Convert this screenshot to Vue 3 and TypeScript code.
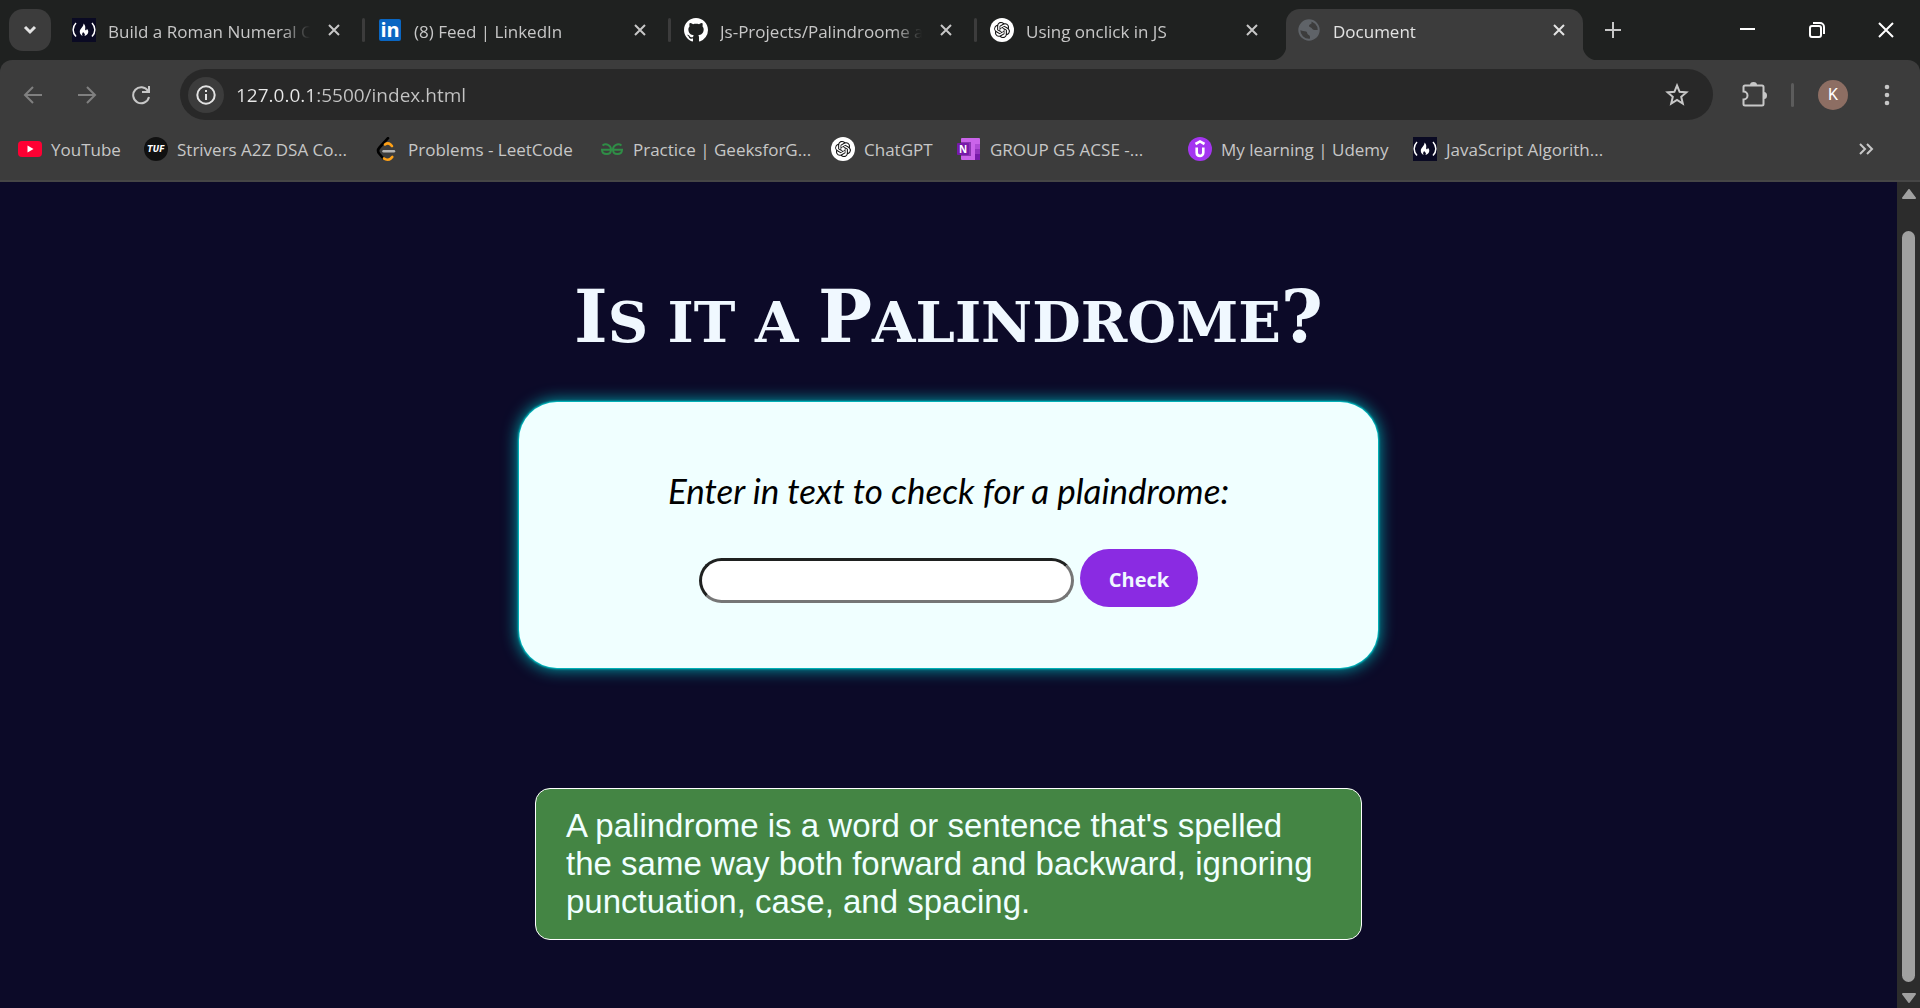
<script setup lang="ts">
import { ref } from 'vue'

interface Tab {
  icon: string
  title: string
  mark?: string
  active?: boolean
}

interface Bookmark {
  icon: string
  label: string
  size: 'short' | 'medium' | 'long'
  mark?: string
}

const tabs: Tab[] = [
  { icon: 'fcc', title: 'Build a Roman Numeral Converter' },
  { icon: 'linkedin', title: '(8) Feed | LinkedIn', mark: 'in' },
  { icon: 'github', title: 'Js-Projects/Palindroome at main' },
  { icon: 'openai', title: 'Using onclick in JS' },
  { icon: 'globe', title: 'Document', active: true },
]

const bookmarks: Bookmark[] = [
  { icon: 'youtube', label: 'YouTube', size: 'short' },
  { icon: 'tuf', label: 'Strivers A2Z DSA Co...', size: 'long', mark: 'TUF' },
  { icon: 'leetcode', label: 'Problems - LeetCode', size: 'medium' },
  { icon: 'gfg', label: 'Practice | GeeksforG...', size: 'long' },
  { icon: 'openai', label: 'ChatGPT', size: 'short' },
  { icon: 'onenote', label: 'GROUP G5 ACSE -...', size: 'long', mark: 'N' },
  { icon: 'udemy', label: 'My learning | Udemy', size: 'medium' },
  { icon: 'fcc', label: 'JavaScript Algorith...', size: 'long' },
]

const address = ref('127.0.0.1:5500/index.html')
const entry = ref('')
</script>

<template>
  <div class="browser">
    <svg class="sprite" aria-hidden="true">
      <symbol id="i-fcc" viewBox="0 0 24 24">
        <rect width="24" height="24" fill="#0a0a23" />
        <path d="M4 5C.2 9 .2 14.500 4 18.500M20 5c3.800 4 3.800 9.500 0 13.500" fill="none" stroke="#fff" stroke-width="1.500" />
        <path d="M11.400 5.500c.8 2.600-3.600 5-3.600 8.300 0 2 1.200 3.500 2.800 4.200-1-1.700-.3-3 .7-4 .2 1.200 1.600 1.200 1.600 2.400 0 .6-.3 1.200-.7 1.600 2.300-.5 4.100-2 4.100-4.300 0-1.300-.8-2.400-1.500-3 0 1-.5 1.600-1.100 1.600-1.500 0 1.200-4.200-2.300-6.800z" fill="#fff" />
      </symbol>
      <symbol id="i-linkedin" viewBox="0 0 24 24">
        <rect x="1" y="1" width="22" height="22" rx="2" fill="#0a66c2" />
      </symbol>
      <symbol id="i-github" viewBox="0 0 16 16">
        <path fill="#fff" d="M8 0C3.580 0 0 3.580 0 8c0 3.540 2.290 6.530 5.470 7.590.4.070.55-.17.55-.38 0-.19-.01-.82-.01-1.490-2.010.37-2.530-.49-2.690-.94-.09-.23-.48-.94-.82-1.130-.28-.15-.68-.52-.01-.53.63-.01 1.080.58 1.230.82.72 1.210 1.870.87 2.330.66.070-.52.28-.87.51-1.070-1.780-.2-3.640-.89-3.640-3.950 0-.87.31-1.590.82-2.150-.08-.2-.36-1.020.08-2.120 0 0 .67-.21 2.200.82.64-.18 1.320-.27 2-.27s1.360.09 2 .27c1.530-1.040 2.200-.82 2.200-.82.44 1.100.16 1.920.08 2.120.51.56.82 1.270.82 2.150 0 3.070-1.870 3.750-3.650 3.950.29.25.54.73.54 1.480 0 1.070-.01 1.930-.01 2.200 0 .21.15.46.55.38A8.010 8.010 0 0 0 16 8c0-4.420-3.580-8-8-8z" />
      </symbol>
      <symbol id="i-openai" viewBox="-6 -6 36 36">
        <circle cx="12" cy="12" r="18" fill="#fff" />
        <path fill="#111" d="M22.2819 9.8211a5.9847 5.9847 0 0 0-.5157-4.9108 6.0462 6.0462 0 0 0-6.5098-2.9A6.0651 6.0651 0 0 0 4.9807 4.1818a5.9847 5.9847 0 0 0-3.9977 2.9 6.0462 6.0462 0 0 0 .7427 7.0966 5.98 5.98 0 0 0 .511 4.9107 6.051 6.051 0 0 0 6.5146 2.9001A5.9847 5.9847 0 0 0 13.2599 24a6.0557 6.0557 0 0 0 5.7718-4.2058 5.9894 5.9894 0 0 0 3.9977-2.9001 6.0557 6.0557 0 0 0-.7475-7.0729zm-9.022 12.6081a4.4755 4.4755 0 0 1-2.8764-1.0408l.1419-.0804 4.7783-2.7582a.7948.7948 0 0 0 .3927-.6813v-6.7369l2.02 1.1686a.071.071 0 0 1 .038.052v5.5826a4.504 4.504 0 0 1-4.4945 4.4944zm-9.6607-4.1254a4.4708 4.4708 0 0 1-.5346-3.0137l.142.0852 4.783 2.7582a.7712.7712 0 0 0 .7806 0l5.8428-3.3685v2.3324a.0804.0804 0 0 1-.0332.0615L9.74 19.9502a4.4992 4.4992 0 0 1-6.1408-1.6464zM2.3408 7.8956a4.485 4.485 0 0 1 2.3655-1.9728V11.6a.7664.7664 0 0 0 .3879.6765l5.8144 3.3543-2.0201 1.1685a.0757.0757 0 0 1-.071 0l-4.8303-2.7865A4.504 4.504 0 0 1 2.3408 7.872zm16.5963 3.8558L13.1038 8.364 15.1192 7.2a.0757.0757 0 0 1 .071 0l4.8303 2.7913a4.4944 4.4944 0 0 1-.6765 8.1042v-5.6772a.79.79 0 0 0-.407-.667zm2.0107-3.0231l-.142-.0852-4.7735-2.7818a.7759.7759 0 0 0-.7854 0L9.409 9.2297V6.8974a.0662.0662 0 0 1 .0284-.0615l4.8303-2.7866a4.4992 4.4992 0 0 1 6.6802 4.66zM8.3065 12.863l-2.02-1.1638a.0804.0804 0 0 1-.038-.0567V6.0742a4.4992 4.4992 0 0 1 7.3757-3.4537l-.142.0805L8.704 5.459a.7948.7948 0 0 0-.3927.6813zm1.0976-2.3654l2.602-1.4998 2.6069 1.4998v2.9994l-2.5974 1.4997-2.6067-1.4997Z" />
      </symbol>
      <symbol id="i-globe" viewBox="0 0 24 24">
        <circle cx="12" cy="12" r="9.700" fill="none" stroke="#5f6368" stroke-width="2" />
        <path fill="#5f6368" d="M12 2c2 1 3 2 2.500 3.500-1 1-2.500 1-2.500 2.500s2.500 1 3 2.500c.5 1.500 2 1.500 3.500 1.500s3-.5 3 .5c-.5 5-4 8.500-8.500 9v-2.500c0-1.500-1-2-2-2.500-1-.5-.5-2.500-2-3C7.500 13 5 13 2 12 2 6.500 6.500 2 12 2z" />
      </symbol>
      <symbol id="i-youtube" viewBox="0 0 24 24">
        <rect y="4" width="24" height="16" rx="4" fill="#ff0033" />
        <path d="M9.500 8.600v6.800l6-3.400z" fill="#fff" />
      </symbol>
      <symbol id="i-tuf" viewBox="0 0 24 24">
        <circle cx="12" cy="12" r="12" fill="#111" />
      </symbol>
      <symbol id="i-leetcode" viewBox="0 0 24 24">
        <path d="M13 1.200 4.500 10.500c-1.800 2-1.800 4.500 0 6.500l3.500 4" fill="none" stroke="#000" stroke-width="2.600" stroke-linecap="round" />
        <path d="M10 7.500c1.800-1.300 4-1.200 5.500 0l1.500 1.600M9 21.500c2 1.600 5 1.600 6.800 0l1.500-1.600" fill="none" stroke="#ffa116" stroke-width="2.600" stroke-linecap="round" />
        <path d="M8.500 14.300h10.500" stroke="#b3b3b3" stroke-width="2.400" stroke-linecap="round" />
      </symbol>
      <symbol id="i-gfg" viewBox="0 0 24 24">
        <path d="M2.500 8.500C6 6 11 8 11 12.500c0 3-2 4.500-4.300 4.500C4 17 2 15.500 2 12.700h20c0 2.800-2 4.300-4.700 4.300-2.300 0-4.300-1.500-4.300-4.500C13 8 18 6 21.500 8.500" fill="none" stroke="#2f8d46" stroke-width="2" />
      </symbol>
      <symbol id="i-onenote" viewBox="0 0 24 24">
        <rect x="4" y="1" width="19" height="22" rx="1" fill="#ca64ea" />
        <path d="M18 7h5v5h-5z" fill="#ae4bd5" />
        <path d="M18 12h5v5h-5z" fill="#9332bf" />
        <path d="M18 17h5v6h-5z" fill="#7719aa" />
        <path d="M4 5h10v14H4z" fill="#8a35b0" />
        <rect y="6" width="12" height="12" rx="1" fill="#7719aa" />
      </symbol>
      <symbol id="i-udemy" viewBox="0 0 24 24">
        <circle cx="12" cy="12" r="12" fill="#a435f0" />
        <path d="m7.500 7 4.500-2.600L16.500 7M8.700 10.500v5c0 4.500 6.600 4.500 6.600 0v-5" fill="none" stroke="#fff" stroke-width="2.600" />
      </symbol>
    </svg>

    <header>
      <div class="tabstrip">
        <button class="tab-search" aria-label="Search tabs">
          <svg width="14" height="10" viewBox="0 0 14 10"><path d="m2 2 5 5 5-5" /></svg>
        </button>
        <div class="tabs">
          <div v-for="tab in tabs" :key="tab.title" class="tab" :class="{ active: tab.active }">
            <svg class="favicon" viewBox="0 0 24 24">
              <use :href="'#i-' + tab.icon" />
              <text v-if="tab.mark" x="12" y="19" :class="'mark-' + tab.icon">{{ tab.mark }}</text>
            </svg>
            <span class="tab-title">{{ tab.title }}</span>
            <button class="tab-close" :aria-label="'Close ' + tab.title">
              <svg width="12" height="12" viewBox="0 0 12 12"><path d="m1 1 10 10M11 1 1 11" /></svg>
            </button>
          </div>
        </div>
        <button class="new-tab" aria-label="New tab">
          <svg width="16" height="16" viewBox="0 0 16 16"><path d="M8 0v16M0 8h16" /></svg>
        </button>
        <div class="window-controls">
          <button aria-label="Minimize">
            <svg width="16" height="16" viewBox="0 0 16 16"><path d="M0 7h15" /></svg>
          </button>
          <button aria-label="Restore">
            <svg width="16" height="16" viewBox="0 0 16 16"><rect x="1" y="4" width="11" height="11" rx="2" /><path d="M4 1h7a4 4 0 0 1 4 4v7" /></svg>
          </button>
          <button aria-label="Close window">
            <svg width="16" height="16" viewBox="0 0 16 16"><path d="m1 1 14 14M15 1 1 15" /></svg>
          </button>
        </div>
      </div>

      <div class="toolbar">
        <button class="nav dim" aria-label="Back">
          <svg width="20" height="20" viewBox="0 0 20 20"><path d="M19 10H2M10 2l-8 8 8 8" /></svg>
        </button>
        <button class="nav dim" aria-label="Forward">
          <svg width="20" height="20" viewBox="0 0 20 20"><path d="M1 10h17M10 2l8 8-8 8" /></svg>
        </button>
        <button class="nav" aria-label="Reload">
          <svg width="20" height="20" viewBox="0 0 20 20"><path d="M17 6a8 8 0 1 0 1 6M18 1v6h-7" /></svg>
        </button>
        <div class="omnibox">
          <button class="site-info" aria-label="View site information">
            <svg width="20" height="20" viewBox="0 0 20 20"><circle cx="10" cy="10" r="8.700" /><path d="M10 9v6M10 5v2" /></svg>
          </button>
          <input v-model="address" class="address" type="text" aria-label="Address" />
          <button class="star" aria-label="Bookmark this tab">
            <svg width="24" height="24" viewBox="0 0 24 24"><path d="m12 2.500 2.600 6.300 6.800.6-5.200 4.400 1.600 6.700-5.800-3.600-5.800 3.600 1.600-6.700-5.200-4.400 6.800-.6z" /></svg>
          </button>
        </div>
        <button class="extensions" aria-label="Extensions">
          <svg width="26" height="26" viewBox="0 0 26 26">
            <path d="M4 3.500h17a1.500 1.500 0 0 1 1.500 1.500v17a1.500 1.500 0 0 1-1.500 1.500H4A1.500 1.500 0 0 1 2.500 22v-4.500a4 4 0 0 0 0-8V5A1.500 1.500 0 0 1 4 3.500z" />
            <path class="solid" d="M9 3a3.500 3 0 0 1 7 0zM23 10a3 3.500 0 0 1 0 7z" />
          </svg>
        </button>
        <span class="divider"></span>
        <button class="avatar" aria-label="Profile">K</button>
        <button class="more" aria-label="Menu">
          <svg width="6" height="22" viewBox="0 0 6 22"><circle cx="3" cy="3" r="2.300" /><circle cx="3" cy="11" r="2.300" /><circle cx="3" cy="19" r="2.300" /></svg>
        </button>
      </div>

      <nav class="bookmarks" aria-label="Bookmarks">
        <a v-for="mark in bookmarks" :key="mark.label" href="#" class="bookmark" :class="mark.size">
          <svg class="favicon" viewBox="0 0 24 24">
            <use :href="'#i-' + mark.icon" />
            <text v-if="mark.icon === 'tuf'" x="12" y="15" class="mark-tuf">{{ mark.mark }}</text>
            <text v-if="mark.icon === 'onenote'" x="6" y="16" class="mark-onenote">{{ mark.mark }}</text>
          </svg>
          <span>{{ mark.label }}</span>
        </a>
        <button class="overflow" aria-label="More bookmarks">
          <svg width="16" height="12" viewBox="0 0 16 12"><path d="m2 1 5 5-5 5M9 1l5 5-5 5" /></svg>
        </button>
      </nav>
    </header>

    <div class="viewport">
      <main>
        <h1>I<span>s it a </span>P<span>alindrome</span>?</h1>
        <form class="card" @submit.prevent>
          <label for="text-input">Enter in text to check for a plaindrome:</label>
          <div class="row">
            <input id="text-input" v-model="entry" type="text" />
            <button type="submit">Check</button>
          </div>
        </form>
        <p class="definition">
          A palindrome is a word or sentence that's spelled the same way both forward and backward, ignoring
          punctuation, case, and spacing.
        </p>
      </main>
      <div class="scrollbar" aria-hidden="true">
        <svg width="14" height="10" viewBox="0 0 14 10"><path d="M7 1 13 9H1z" /></svg>
        <div class="thumb"></div>
        <svg width="14" height="10" viewBox="0 0 14 10"><path d="M7 9 1 1h12z" /></svg>
      </div>
    </div>
  </div>
</template>

<style>
body {
  background: #0c0a28;
}
</style>

<style scoped>
* {
  box-sizing: border-box;
}

.browser {
  display: flex;
  flex-direction: column;
  min-height: 100vh;
  font-family: "Open Sans", "Noto Sans", sans-serif;
  font-size: 17px;
  color: #c7c7c7;
}

.sprite {
  position: absolute;
  width: 0;
  height: 0;
}

button {
  padding: 0;
  border: 0;
  background: none;
  color: inherit;
  font-family: inherit;
  display: flex;
  align-items: center;
  justify-content: center;
}

header {
  background: #1f2120;
}

header svg {
  flex: none;
  display: block;
}

header button svg {
  fill: none;
  stroke: currentColor;
  stroke-width: 2;
}

.favicon {
  width: 24px;
  height: 24px;
}

.favicon text {
  fill: #fff;
  text-anchor: middle;
  font-weight: 700;
}

.mark-linkedin {
  font-size: 20px;
}

.mark-tuf {
  font-family: "DejaVu Sans", sans-serif;
  font-size: 8px;
  font-style: italic;
}

.mark-onenote {
  font-size: 10px;
}

/* Tab strip */
.tabstrip {
  display: flex;
  align-items: center;
  height: 60px;
  padding-left: 9px;
}

.tab-search {
  width: 42px;
  height: 42px;
  margin-right: 9px;
  border-radius: 14px;
  background: #3c3c3c;
  color: #e3e3e3;
}

.tab-search svg {
  stroke-width: 3;
}

.tabs {
  display: flex;
  align-self: stretch;
  padding-top: 9px;
}

.tab {
  position: relative;
  display: flex;
  align-items: center;
  width: 306px;
  height: 51px;
  padding: 0 20px 9px 12px;
}

.tab:not(.active)::after {
  content: "";
  position: absolute;
  top: 9px;
  right: 1px;
  width: 3px;
  height: 24px;
  border-radius: 2px;
  background: #3c3c3c;
}

.tab:nth-last-child(2)::after {
  display: none;
}

.tab.active {
  width: 297px;
  margin-left: 2px;
  padding-left: 11px;
  padding-right: 12px;
  border-radius: 14px 14px 0 0;
  background: #3c3c3c;
  color: #e3e3e3;
}

.tab.active::before,
.tab.active::after {
  content: "";
  position: absolute;
  bottom: 0;
  width: 15px;
  height: 15px;
}

.tab.active::before {
  right: 100%;
  background: radial-gradient(circle at 0 0, #1f2120 15px, #3c3c3c 16px);
}

.tab.active::after {
  left: 100%;
  background: radial-gradient(circle at 100% 0, #1f2120 15px, #3c3c3c 16px);
}

.tab-title {
  flex: 1;
  margin: 3px 12px 0;
  overflow: hidden;
  white-space: nowrap;
  line-height: 24px;
  mask-image: linear-gradient(90deg, #000 calc(100% - 28px), transparent);
}

.tab-close {
  width: 24px;
  height: 24px;
}

.new-tab {
  width: 40px;
  height: 42px;
  margin-left: 10px;
}

.window-controls {
  display: flex;
  margin-left: auto;
  color: #fff;
}

.window-controls button {
  width: 69px;
  height: 60px;
}

/* Toolbar */
.toolbar {
  display: flex;
  align-items: center;
  height: 69px;
  padding: 0 18px 0 6px;
  border-radius: 12px 12px 0 0;
  background: #3c3c3c;
}

.nav {
  width: 54px;
  height: 42px;
}

.dim {
  color: #808080;
}

.omnibox {
  flex: 1;
  display: flex;
  align-items: center;
  height: 51px;
  margin-left: 12px;
  padding: 0 24px 0 8px;
  border-radius: 26px;
  background: #282828;
}

.site-info {
  width: 36px;
  height: 36px;
  border-radius: 50%;
  background: #3c3c3c;
  color: #e3e3e3;
}

.address {
  flex: 1;
  height: 36px;
  margin-left: 12px;
  padding: 0;
  border: 0;
  outline: 0;
  font: inherit;
  font-size: 19px;
  color: transparent;
  background: linear-gradient(90deg, #e8e8e8 81px, #c4c4c4 81px);
  background-clip: text;
  -webkit-background-clip: text;
}

.extensions {
  margin-left: 28px;
}

.extensions .solid {
  fill: currentColor;
  stroke: none;
}

.divider {
  width: 3px;
  height: 24px;
  margin: 0 24px;
  border-radius: 2px;
  background: #5c5c5c;
}

.avatar {
  width: 30px;
  height: 30px;
  border-radius: 50%;
  background: #8d6e63;
  color: #fff;
  font-family: Roboto, sans-serif;
  font-size: 16px;
}

.more {
  width: 30px;
  margin-left: 24px;
}

.more svg {
  fill: currentColor;
  stroke: none;
}

/* Bookmarks bar */
.bookmarks {
  display: flex;
  align-items: center;
  height: 53px;
  padding: 0 46px 11px 18px;
  border-bottom: 2px solid #464646;
  background: #3c3c3c;
}

.bookmark {
  display: flex;
  align-items: center;
  gap: 9px;
  color: inherit;
  text-decoration: none;
  white-space: nowrap;
}

.short {
  width: 126px;
}

.medium {
  width: 225px;
}

.long {
  width: 231px;
}

.overflow {
  margin-left: auto;
}

/* Page */
.viewport {
  flex: 1;
  display: flex;
}

main {
  flex: 1;
  display: flex;
  flex-direction: column;
  align-items: center;
  padding: 87px 24px 60px;
}

h1 {
  margin: 0;
  font-family: "DejaVu Serif", serif;
  font-size: 72px;
  line-height: 96px;
  font-weight: 700;
  color: #f0f8ff;
}

h1 span {
  font-size: 56px;
  line-height: 56px;
  text-transform: uppercase;
}

.card {
  display: flex;
  flex-direction: column;
  align-items: center;
  width: 100%;
  max-width: 859px;
  margin-top: 37px;
  padding: 66px 24px 61px;
  border-radius: 38px;
  background: #f0ffff;
  box-shadow: 0 0 2px 1px #00ced1, 0 0 15px 2px #0097a0;
}

.card label {
  font-family: Lato, sans-serif;
  font-size: 35px;
  line-height: 44px;
  font-style: italic;
  color: #000;
}

.row {
  display: flex;
  align-items: center;
  gap: 6px;
  margin-top: 37px;
}

.row input {
  width: 375px;
  height: 45px;
  margin-top: 4px;
  padding: 0 15px;
  border: 3px solid;
  border-color: #1f2120 #767676 #767676 #1f2120;
  border-radius: 23px;
  background: #fff;
  font: inherit;
  font-size: 20px;
}

.row button {
  width: 118px;
  height: 58px;
  padding-top: 3px;
  border-radius: 29px;
  background: #8a2be2;
  color: #f0f8ff;
  font-size: 20px;
  font-weight: 700;
}

.definition {
  width: 100%;
  max-width: 827px;
  margin: 120px 0 0;
  padding: 18px 30px;
  border: 1px solid #fff;
  border-radius: 15px;
  background: #448544;
  font-family: "Liberation Sans", Arial, sans-serif;
  font-size: 33px;
  line-height: 38px;
  color: #f0ffff;
}

/* Scrollbar */
.scrollbar {
  display: flex;
  flex-direction: column;
  align-items: center;
  width: 23px;
  padding: 7px 0 5px;
  background: #2c2c2c;
}

.scrollbar svg {
  flex: none;
  fill: #a0a0a0;
  stroke: #a0a0a0;
  stroke-width: 2;
  stroke-linejoin: round;
}

.thumb {
  flex: 1;
  width: 13px;
  margin: 32px 0 11px;
  border-radius: 7px;
  background: #a0a0a0;
}
</style>
